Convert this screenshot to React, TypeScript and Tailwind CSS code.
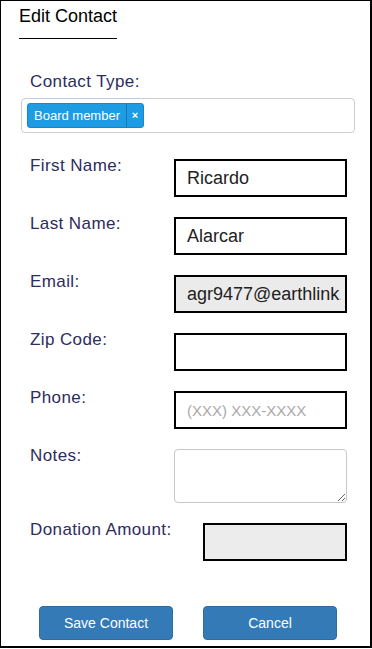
import React from "react";

const labelCls = "text-[17px] tracking-[0.4px] leading-[18px] text-[#2d2c5e] -mt-[2px] shrink-0 whitespace-nowrap";
const inputCls =
  "h-[38px] border-2 border-black pl-[11px] pr-[4px] text-[18px] text-[#222] outline-none placeholder:text-[#a9a9a9] placeholder:text-[15px] font-['Liberation_Sans',Arial,sans-serif]";

function Row({ label, children, labelW = "w-[144px]" }: { label: string; children: React.ReactNode; labelW?: string }) {
  return (
    <div className="flex items-start pl-[29px]">
      <div className={`${labelCls} ${labelW}`}>{label}</div>
      {children}
    </div>
  );
}

export default function App() {
  return (
    <div className="w-[372px] h-[648px] border-l border-t border-r-2 border-b-2 border-black bg-white font-['Liberation_Sans',Arial,sans-serif] flex flex-col">
      <div className="pl-[18px] pt-[4px]">
        <div className="inline-block w-[98px] whitespace-nowrap text-[18px] leading-[21px] text-black pb-[11px] border-b border-black">
          Edit Contact
        </div>
      </div>

      <div className="mt-[34px] pl-[29px] text-[17px] tracking-[0.4px] leading-[18px] text-[#2d2c5e]">Contact Type:</div>
      <div className="mt-[7px] ml-[20px] w-[334px] h-[35px] border border-[#cccccc] rounded-[4px] flex items-start pt-[4px] pl-[5px]">
        <div className="flex h-[25px] bg-[#1d9be3] border border-[#1787cc] rounded-[3px] text-white">
          <span className="px-[6px] text-[13px] leading-[23px]">Board member</span>
          <span className="w-[17px] border-l border-[#1577b8] flex items-center justify-center text-[11px] font-bold leading-none">
            ×
          </span>
        </div>
      </div>

      <div className="mt-[26px] flex flex-col gap-[20px]">
        <Row label="First Name:">
          <input className={`${inputCls} w-[173px] bg-white`} defaultValue="Ricardo" />
        </Row>
        <Row label="Last Name:">
          <input className={`${inputCls} w-[173px] bg-white`} defaultValue="Alarcar" />
        </Row>
        <Row label="Email:">
          <input className={`${inputCls} w-[173px] bg-[#ebebeb]`} defaultValue="agr9477@earthlink.net" readOnly />
        </Row>
        <Row label="Zip Code:">
          <input className={`${inputCls} w-[173px] bg-white`} defaultValue="" />
        </Row>
        <Row label="Phone:">
          <input className={`${inputCls} w-[173px] bg-white`} placeholder="(XXX) XXX-XXXX" />
        </Row>
        <Row label="Notes:">
          <textarea className="w-[173px] h-[54px] border border-[#c8c8c8] rounded-[4px] bg-white outline-none" />
        </Row>
        <Row label="Donation Amount:" labelW="w-[173px]">
          <input className={`${inputCls} w-[144px] bg-[#ececec]`} readOnly />
        </Row>
      </div>

      <div className="mt-[45px] pl-[38px] flex gap-[30px]">
        <button className="w-[134px] h-[34px] rounded-[4px] bg-[#337ab7] border border-[#2e6da4] text-white text-[14px]">
          Save Contact
        </button>
        <button className="w-[134px] h-[34px] rounded-[4px] bg-[#337ab7] border border-[#2e6da4] text-white text-[14px]">
          Cancel
        </button>
      </div>
    </div>
  );
}
